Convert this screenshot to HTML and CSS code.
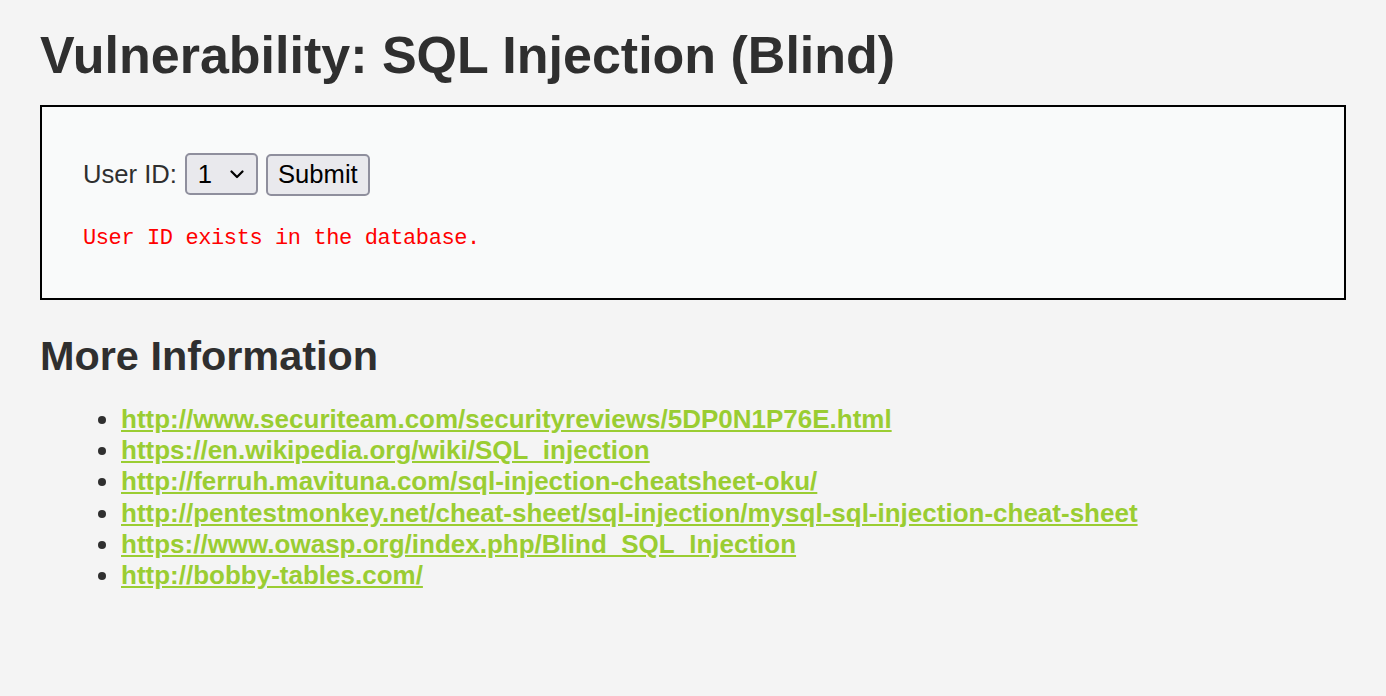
FILE: index.html
```html
<!DOCTYPE html>
<html lang="en">
  <head>
    <meta charset="UTF-8" />
    <title>Vulnerability: SQL Injection (Blind)</title>
    <link rel="stylesheet" href="styles.css">
  </head>
  <body>
    <div class="body_padded">
      <h1>Vulnerability: SQL Injection (Blind)</h1>

      <div class="vulnerable_code_area">
        <form class="id-form" action="#" method="GET">
          <span class="label">User ID:</span>
          <span class="select-wrap">
            <select name="id">
              <option value="1" selected>1</option>
              <option value="2">2</option>
              <option value="3">3</option>
              <option value="4">4</option>
              <option value="5">5</option>
            </select>
            <svg class="chevron" width="14" height="9" viewBox="0 0 14 9">
              <path d="M1.5 1.5 L7 7 L12.5 1.5" fill="none" stroke="#000" stroke-width="2.2" stroke-linecap="round" stroke-linejoin="round" />
            </svg>
          </span>
          <input type="submit" name="Submit" value="Submit">
        </form>
        <pre class="message">User ID exists in the database.</pre>
      </div>

      <h2>More Information</h2>
      <ul class="links">
        <li><a href="#">http://www.securiteam.com/securityreviews/5DP0N1P76E.html</a></li>
        <li><a href="#">https://en.wikipedia.org/wiki/SQL_injection</a></li>
        <li><a href="#">http://ferruh.mavituna.com/sql-injection-cheatsheet-oku/</a></li>
        <li><a href="#">http://pentestmonkey.net/cheat-sheet/sql-injection/mysql-sql-injection-cheat-sheet</a></li>
        <li><a href="#">https://www.owasp.org/index.php/Blind_SQL_Injection</a></li>
        <li><a href="#">http://bobby-tables.com/</a></li>
      </ul>
    </div>
  </body>
</html>
```

FILE: styles.css
```css
body {
  margin: 0;
  background: #f4f4f4;
  color: #2f2f2f;
  font-family: "Liberation Sans", Arial, sans-serif;
  font-size: 25.6px;
}

.body_padded {
  padding: 26px 40px 40px;
}

h1 {
  margin: 0 0 20px;
  font-size: 52px;
  font-weight: bold;
  line-height: 59px;
}

.vulnerable_code_area {
  border: 2px solid #000;
  background: #f9fafa;
  padding: 46px 41px 46px;
}

.id-form {
  display: flex;
  align-items: baseline;
  margin: 0;
}

.label {
  margin-right: 8px;
}

.select-wrap {
  position: relative;
  display: inline-block;
  margin-right: 8px;
}

select,
input[type="submit"] {
  appearance: none;
  -webkit-appearance: none;
  font-family: "Liberation Sans", Arial, sans-serif;
  font-size: 25.6px;
  color: #000;
  background: #e9e9ed;
  border: 2px solid #8f8f9d;
  border-radius: 5px;
  height: 42px;
  margin: 0;
}

select {
  width: 73px;
  padding: 0 0 0 11px;
}

.chevron {
  position: absolute;
  left: 45px;
  top: 17px;
  pointer-events: none;
}

input[type="submit"] {
  padding: 0 10px;
  width: 104px;
}

.message {
  margin: 30px 0 0;
  color: #ff0000;
  font-family: "Liberation Mono", "Courier New", monospace;
  font-size: 22px;
  letter-spacing: -0.4px;
  line-height: 1.2;
}

h2 {
  margin: 33px 0 24px;
  font-size: 41.4px;
  font-weight: bold;
  line-height: normal;
}

.links {
  margin: 0;
  padding-left: 81px;
  line-height: 31.2px;
  font-size: 26px;
}

.links a {
  color: #9acd32;
  font-weight: bold;
  text-decoration: underline;
}
```
